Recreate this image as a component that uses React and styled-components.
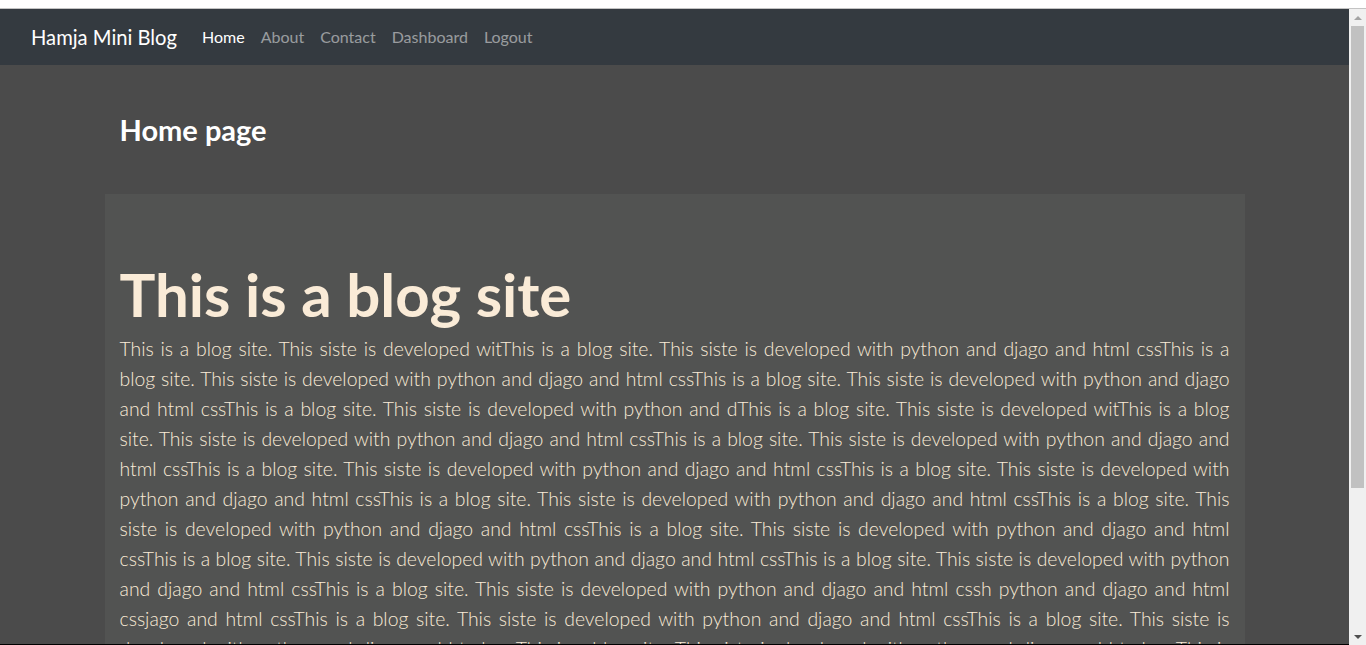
import React from "react";
import styled, { createGlobalStyle } from "styled-components";

const GlobalStyle = createGlobalStyle`
  html, body {
    margin: 0;
    padding: 0;
    overflow: hidden;
    background: #ffffff;
  }
  * {
    box-sizing: border-box;
  }
`;

const Frame = styled.div`
  height: 645px;
  display: flex;
  flex-direction: column;
  font-family: Lato, "Open Sans", "Liberation Sans", sans-serif;
`;

const TopStrip = styled.div`
  height: 9px;
  flex-shrink: 0;
  background: #ffffff;
  border-bottom: 1px solid #c3c3c3;
`;

const Viewport = styled.div`
  flex: 1;
  display: flex;
  min-height: 0;
`;

const Page = styled.div`
  flex: 1;
  overflow: hidden;
  background: #4b4b4b;
  border-bottom: 1px solid #000000;
`;

const Navbar = styled.nav`
  height: 56px;
  background: #343a40;
  display: flex;
  align-items: center;
  padding: 0 16px 0 31px;
`;

const Brand = styled.a`
  font-size: 20.2px;
  color: #ffffff;
  margin-right: 17px;
  white-space: nowrap;
  margin-top: -1px;
`;

const NavLink = styled.a`
  font-size: 16px;
  padding: 8px;
  margin-top: -2px;
  color: ${(p) => (p.$active ? "#ffffff" : "rgba(255, 255, 255, 0.5)")};
  white-space: nowrap;
`;

const Container = styled.div`
  max-width: 1140px;
  margin: 0 auto;
  padding: 0 15px;
`;

const PageTitle = styled.h3`
  margin: 48px 0 0;
  height: 81px;
  font-size: 29px;
  font-weight: 700;
  line-height: 1.2;
  color: #ffffff;
`;

const Jumbotron = styled.section`
  max-width: 1140px;
  margin: 0 auto;
  padding: 62px 15px 64px;
  background: #525352;
`;

const Heading = styled.h1`
  margin: 0;
  font-size: 60px;
  line-height: 77px;
  font-weight: 700;
  color: #faebd7;
`;

const Lead = styled.p`
  margin: 1px 0 0;
  font-size: 19.4px;
  font-weight: 300;
  line-height: 30px;
  color: #faebd7;
`;

const Line = styled.span`
  display: block;
  text-align: justify;
  text-align-last: justify;
`;

const Scrollbar = styled.div`
  width: 17px;
  flex-shrink: 0;
  background: #f0f0f0;
  display: flex;
  flex-direction: column;
  align-items: center;
`;

const Arrow = styled.div`
  height: 17px;
  width: 17px;
  display: flex;
  align-items: center;
  justify-content: center;
  flex-shrink: 0;
  &::after {
    content: "";
    border-left: 4px solid transparent;
    border-right: 4px solid transparent;
    ${(p) =>
      p.$down
        ? "border-top: 4px solid #505050;"
        : "border-bottom: 4px solid #a3a3a3;"}
  }
`;

const Thumb = styled.div`
  width: 13px;
  height: 462px;
  background: #c1c1c1;
`;

const Spacer = styled.div`
  flex: 1;
`;

const lines = [
  "This is a blog site. This siste is developed witThis is a blog site. This siste is developed with python and djago and html cssThis is a",
  "blog site. This siste is developed with python and djago and html cssThis is a blog site. This siste is developed with python and djago",
  "and html cssThis is a blog site. This siste is developed with python and dThis is a blog site. This siste is developed witThis is a blog",
  "site. This siste is developed with python and djago and html cssThis is a blog site. This siste is developed with python and djago and",
  "html cssThis is a blog site. This siste is developed with python and djago and html cssThis is a blog site. This siste is developed with",
  "python and djago and html cssThis is a blog site. This siste is developed with python and djago and html cssThis is a blog site. This",
  "siste is developed with python and djago and html cssThis is a blog site. This siste is developed with python and djago and html",
  "cssThis is a blog site. This siste is developed with python and djago and html cssThis is a blog site. This siste is developed with python",
  "and djago and html cssThis is a blog site. This siste is developed with python and djago and html cssh python and djago and html",
  "cssjago and html cssThis is a blog site. This siste is developed with python and djago and html cssThis is a blog site. This siste is",
  "developed with python and djago and html cssThis is a blog site. This siste is developed with python and djago and html cssThis is",
];

export default function App() {
  return (
    <Frame>
      <GlobalStyle />
      <TopStrip />
      <Viewport>
        <Page>
          <Navbar>
            <Brand>Hamja Mini Blog</Brand>
            <NavLink $active>Home</NavLink>
            <NavLink>About</NavLink>
            <NavLink>Contact</NavLink>
            <NavLink>Dashboard</NavLink>
            <NavLink>Logout</NavLink>
          </Navbar>
          <Container>
            <PageTitle>Home page</PageTitle>
          </Container>
          <Jumbotron>
            <Heading>This is a blog site</Heading>
            <Lead>
              {lines.map((l, i) => (
                <Line key={i}>{l}</Line>
              ))}
            </Lead>
          </Jumbotron>
        </Page>
        <Scrollbar>
          <Arrow />
          <Thumb />
          <Spacer />
          <Arrow $down />
        </Scrollbar>
      </Viewport>
    </Frame>
  );
}
